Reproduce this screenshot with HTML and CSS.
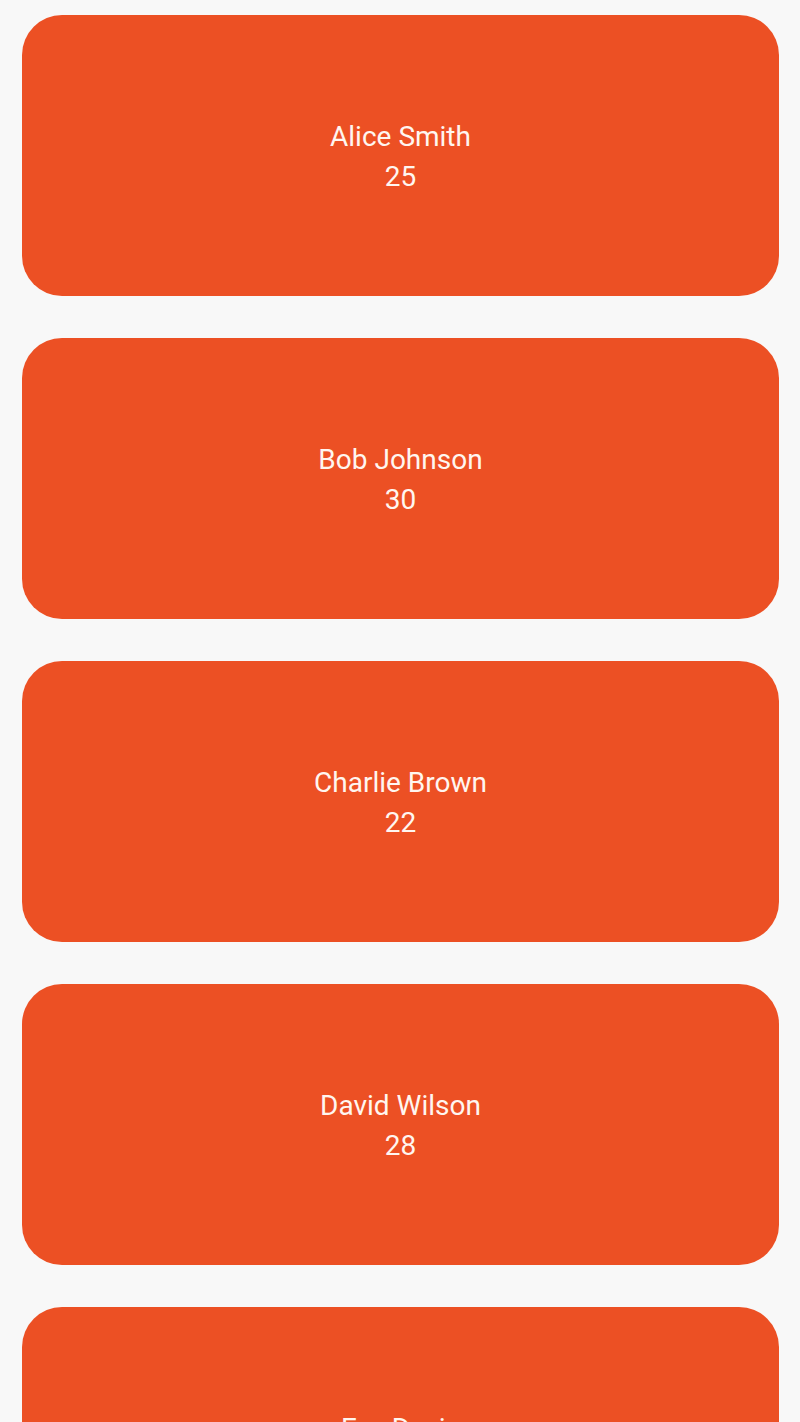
FILE: index.html
```html
<!DOCTYPE html>
<html>
<head>
<meta charset="utf-8">
<link rel="stylesheet" href="styles.css">
</head>
<body>
<div class="list">
  <div class="card"><div class="name">Alice Smith</div><div class="age">25</div></div>
  <div class="card"><div class="name">Bob Johnson</div><div class="age">30</div></div>
  <div class="card"><div class="name">Charlie Brown</div><div class="age">22</div></div>
  <div class="card"><div class="name">David Wilson</div><div class="age">28</div></div>
  <div class="card"><div class="name">Eve Davis</div><div class="age">35</div></div>
</div>
</body>
</html>
```
FILE: styles.css
```css
html, body {
  margin: 0;
  padding: 0;
  background: #f8f8f8;
  height: 1422px;
  overflow: hidden;
}
.list {
  display: flex;
  flex-direction: column;
  gap: 42px;
  padding: 15px 21px 0 22px;
}
.card {
  height: 281px;
  box-sizing: border-box;
  padding-top: 3px;
  flex: none;
  background: #ec5024;
  border-radius: 40px;
  display: flex;
  flex-direction: column;
  align-items: center;
  justify-content: center;
  color: #fff6f0;
  font-family: Roboto, "Noto Sans", sans-serif;
  font-size: 28px;
  line-height: 40px;
}
```
